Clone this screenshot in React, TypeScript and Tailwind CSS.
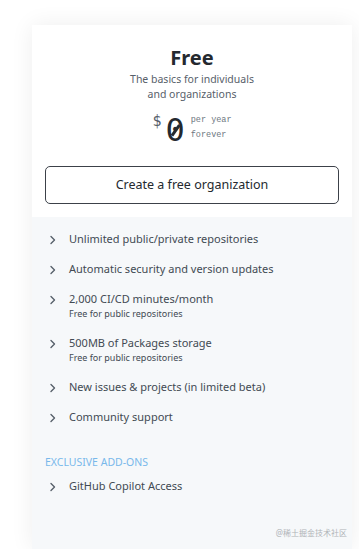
import React from "react";

const Chevron = () => (
  <svg width="8" height="10" viewBox="0 0 8 10" className="shrink-0 mt-[4px]" fill="none">
    <path d="M2 1.5 L5.5 5 L2 8.5" stroke="#57606a" strokeWidth="1.4" strokeLinecap="round" strokeLinejoin="round" />
  </svg>
);

const Item = ({ text, sub }: { text: string; sub?: string }) => (
  <li className="flex gap-[12px] pl-[4px]">
    <Chevron />
    <div className="flex flex-col">
      <span className="text-[11px] leading-[16px] text-[#424a53]">{text}</span>
      {sub && <span className="text-[9px] leading-[14px] text-[#424a53]">{sub}</span>}
    </div>
  </li>
);

export default function App() {
  return (
    <div className="relative w-[359px] h-[549px] bg-white overflow-hidden" style={{ fontFamily: '"Noto Sans", sans-serif' }}>
      <div className="pl-[32px] pt-[25px] h-full">
        <div className="w-[320px] h-[524px] flex flex-col shadow-[0_0_22px_rgba(0,0,0,0.07)]">
          <div className="bg-white px-[13px] pt-[20px] pb-[13px] flex flex-col items-center">
            <h2 className="text-[20px] leading-[26px] font-bold text-[#24292f]">Free</h2>
            <p className="mt-[1px] text-[10.5px] leading-[15px] text-[#57606a] text-center">
              The basics for individuals
              <br />
              and organizations
            </p>
            <div className="mt-[10px] flex items-start" style={{ fontFamily: '"DejaVu Sans Mono", monospace' }}>
              <span className="text-[15px] leading-[18px] text-[#57606a] mr-[4px]">$</span>
              <span className="relative text-[32px] leading-[36px] text-[#24292f]">
                0
                <span className="absolute left-[4px] top-[17px] w-[13px] h-[2.5px] bg-[#24292f] -rotate-[55deg]" />
              </span>
              <div className="ml-[6px] mt-[1px] flex flex-col text-[8.5px] leading-[15px] text-[#6e7781]" style={{ fontFamily: '"Liberation Mono", monospace' }}>
                <span>per year</span>
                <span>forever</span>
              </div>
            </div>
            <button className="mt-[18px] w-full h-[38px] rounded-[5px] border border-[#3c4149] bg-white text-[12.5px] text-[#24292f]">
              Create a free organization
            </button>
          </div>
          <div className="flex-1 bg-[#f6f8fa] px-[13px] pt-[14px]">
            <ul className="flex flex-col gap-[14px]">
              <Item text="Unlimited public/private repositories" />
              <Item text="Automatic security and version updates" />
              <Item text="2,000 CI/CD minutes/month" sub="Free for public repositories" />
              <Item text="500MB of Packages storage" sub="Free for public repositories" />
              <Item text="New issues & projects (in limited beta)" />
              <Item text="Community support" />
            </ul>
            <div className="mt-[29px] text-[10.5px] leading-[16px] text-[#79b8eb] uppercase">Exclusive add-ons</div>
            <ul className="mt-[8px] flex flex-col">
              <Item text="GitHub Copilot Access" />
            </ul>
          </div>
        </div>
      </div>
      <div
        className="absolute right-[12px] bottom-[10px] text-[8px] leading-[12px] text-[#b0b4b8]"
        style={{ fontFamily: '"Noto Sans", "Noto Sans CJK SC", sans-serif' }}
      >
        @稀土掘金技术社区
      </div>
    </div>
  );
}
